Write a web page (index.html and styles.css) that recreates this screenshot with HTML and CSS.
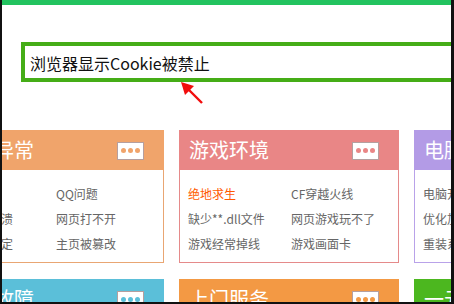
FILE: index.html
```html
<!DOCTYPE html>
<html lang="zh-CN">
<head>
<meta charset="utf-8">
<link rel="stylesheet" href="styles.css">
</head>
<body>
<div class="frame">
  <div class="topbar"></div>
  <div class="notice-wrap">
    <div class="notice">浏览器显示Cookie被禁止</div>
    <svg class="arrow" width="26" height="26" viewBox="0 0 26 26">
      <line x1="22" y1="22" x2="8" y2="8" stroke="#f20d0d" stroke-width="2.4"/>
      <polygon points="1,1 14,5 5,14" fill="#f20d0d"/>
    </svg>
  </div>
  <div class="grid">
    <div class="card c-orange">
      <div class="card-head"><span class="title">网络异常</span><span class="more"><i></i><i></i><i></i></span></div>
      <div class="card-body"><a>无法上网</a><a>QQ问题</a><a>浏览器崩溃</a><a>网页打不开</a><a>首页被锁定</a><a>主页被篡改</a></div>
    </div>
    <div class="card c-pink">
      <div class="card-head"><span class="title">游戏环境</span><span class="more"><i></i><i></i><i></i></span></div>
      <div class="card-body"><a class="hot">绝地求生</a><a>CF穿越火线</a><a>缺少**.dll文件</a><a>网页游戏玩不了</a><a>游戏经常掉线</a><a>游戏画面卡</a></div>
    </div>
    <div class="card c-purple">
      <div class="card-head"><span class="title">电脑提速</span><span class="more"><i></i><i></i><i></i></span></div>
      <div class="card-body"><a>电脑开机慢</a><a>内存不足</a><a>优化加速</a><a>磁盘清理</a><a>重装系统</a><a>驱动更新</a></div>
    </div>
    <div class="card c-blue">
      <div class="card-head"><span class="title">硬件故障</span><span class="more"><i></i><i></i><i></i></span></div>
      <div class="card-body"></div>
    </div>
    <div class="card c-amber">
      <div class="card-head"><span class="title">上门服务</span><span class="more"><i></i><i></i><i></i></span></div>
      <div class="card-body"></div>
    </div>
    <div class="card c-green">
      <div class="card-head"><span class="title">一元服务</span><span class="more"><i></i><i></i><i></i></span></div>
      <div class="card-body"></div>
    </div>
  </div>
</div>
</body>
</html>
```
FILE: styles.css
```css
* { box-sizing: border-box; }
html, body { margin: 0; padding: 0; background: #fff; }
body { font-family: "Noto Sans CJK SC", "Noto Sans", sans-serif; }
.frame {
  width: 454px;
  height: 304px;
  overflow: hidden;
  border-left: 2px solid #111;
  border-right: 3px solid #111;
  border-bottom: 2px solid #111;
  background: #fff;
}
.topbar { height: 5px; background: #22c35f; }
.notice-wrap { position: relative; margin: 37px 0 0 19px; }
.notice {
  width: 460px;
  height: 40px;
  border: 4px solid #45ad17;
  padding: 0 0 0 5px;
  font-size: 16px;
  line-height: 34px;
  color: #111;
  white-space: nowrap;
}
.arrow { position: absolute; left: 159px; top: 39px; }
.grid {
  display: grid;
  grid-template-columns: repeat(3, 220px);
  column-gap: 15px;
  row-gap: 16px;
  margin: 48px 0 0 -58px;
}
.card-head {
  height: 40px;
  display: flex;
  align-items: center;
  justify-content: space-between;
  padding: 0 20px 0 10px;
  color: #fff;
}
.title { font-size: 20px; line-height: 40px; font-weight: 400; letter-spacing: 0; }
.more {
  width: 27px;
  height: 18px;
  background: #fff;
  border: 1px solid rgba(0,0,0,0.3);
  display: flex;
  align-items: center;
  justify-content: center;
  gap: 2px;
  margin-top: 1px;
}
.more i { width: 5px; height: 5px; border-radius: 50%; background: currentColor; }
.card-body {
  height: 93px;
  border: 1px solid;
  border-top: none;
  padding: 11px 0 0 8px;
  display: grid;
  grid-template-columns: 103px 1fr;
  grid-auto-rows: 25px;
  font-size: 12px;
  line-height: 25px;
  color: #666;
  white-space: nowrap;
  overflow: hidden;
}
.card-body a { color: #666; }
.card-body a.hot { color: #ff5a00; }
.c-orange .card-head { background: #f0a46b; }
.c-orange .more, .c-orange .card-body { color: #f0a46b; border-color: #e9a673; }
.c-pink .card-head { background: #e98686; }
.c-pink .more, .c-pink .card-body { color: #e98686; border-color: #e58a8a; }
.c-purple .card-head { background: #b39be6; }
.c-purple .more, .c-purple .card-body { color: #b39be6; border-color: #b9a2e9; }
.c-blue .card-head { background: #5bbfd9; }
.c-blue .more, .c-blue .card-body { color: #5bbfd9; border-color: #5bbfd9; }
.c-amber .card-head { background: #f39944; }
.c-amber .more, .c-amber .card-body { color: #f39944; border-color: #f39944; }
.c-green .card-head { background: #4cb71f; }
.c-green .more, .c-green .card-body { color: #4cb71f; border-color: #4cb71f; }
.more { border-color: rgba(120,80,80,0.55) !important; }
```
